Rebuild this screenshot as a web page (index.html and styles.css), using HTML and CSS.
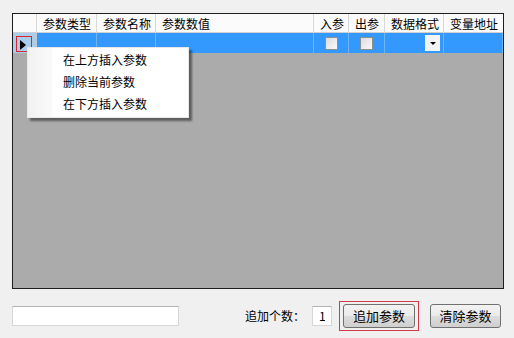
FILE: index.html
```html
<!DOCTYPE html>
<html lang="zh-CN">
<head>
    <meta charset="UTF-8">
    <title>参数设置</title>
    <link rel="stylesheet" href="styles.css">
</head>
<body>
    <div class="panel">
        <div class="grid">
            <div class="row head">
                <div class="cell rh"></div>
                <div class="cell">参数类型</div>
                <div class="cell">参数名称</div>
                <div class="cell">参数数值</div>
                <div class="cell">入参</div>
                <div class="cell">出参</div>
                <div class="cell">数据格式</div>
                <div class="cell">变量地址</div>
            </div>
            <div class="row sel">
                <div class="cell rh"><span class="mark"><span class="arrow"></span></span></div>
                <div class="cell"></div>
                <div class="cell"></div>
                <div class="cell"></div>
                <div class="cell mid"><span class="chk"></span></div>
                <div class="cell mid"><span class="chk"></span></div>
                <div class="cell drop"><span class="ddbtn"><span class="tri"></span></span></div>
                <div class="cell"></div>
            </div>

            <!-- 右键菜单 -->
            <div class="menu">
                <div class="item">在上方插入参数</div>
                <div class="item">删除当前参数</div>
                <div class="item">在下方插入参数</div>
            </div>
        </div>

        <div class="bottom">
            <input type="text" class="name-box">
            <span class="label">追加个数：</span>
            <input type="text" class="count-box" value="1">
            <span class="hl"><button>追加参数</button></span>
            <button class="clear">清除参数</button>
        </div>
    </div>
</body>
</html>
```

FILE: styles.css
```css
body {
    margin: 0;
    background: #f0f0f0;
    font-family: "Noto Sans CJK SC", "DejaVu Sans", sans-serif;
    font-size: 12px;
    color: #000;
}

.panel {
    padding: 13px 0 0 12px;
}

/* 表格 */
.grid {
    position: relative;
    width: 490px;
    height: 274px;
    border: 1px solid #1e1e1e;
    background: #ababab;
}

.row {
    display: grid;
    grid-template-columns: 24px 60px 59px 158px 35px 36px 59px 59px;
}

.head {
    height: 19px;
    background: #fbfbfb;
}

.head .cell {
    border-right: 1px solid #d8d8d8;
    border-bottom: 1px solid #d0d0d0;
    padding-left: 6px;
    line-height: 19px;
    white-space: nowrap;
}

.head .cell:last-child {
    border-right: none;
}

.sel {
    height: 20px;
    background: #3399ff;
}

.sel .cell {
    border-right: 1px solid #6fb5fa;
}

.sel .cell.rh {
    background: #a9cdea;
    border-right: 1px solid #c8c8c8;
}

.cell {
    box-sizing: border-box;
    overflow: hidden;
}

.mark {
    display: block;
    margin: 3px 0 0 3px;
    width: 16px;
    height: 16px;
    box-sizing: border-box;
    border: 1px solid #d7262e;
    position: relative;
}

.arrow {
    position: absolute;
    left: 3px;
    top: 3px;
    border-left: 6px solid #000;
    border-top: 5px solid transparent;
    border-bottom: 5px solid transparent;
}

.mid {
    display: flex;
    align-items: center;
    justify-content: center;
}

.chk {
    width: 11px;
    height: 11px;
    border: 1px solid #8e8f8f;
    background: linear-gradient(135deg, #dcdcdc, #fafafa);
}

.drop {
    display: flex;
    justify-content: flex-end;
    align-items: center;
    padding-right: 3px;
}

.ddbtn {
    width: 15px;
    height: 16px;
    background: #f4f4f4;
    display: flex;
    align-items: center;
    justify-content: center;
}

.tri {
    border-top: 3px solid #000;
    border-left: 3px solid transparent;
    border-right: 3px solid transparent;
}

/* 右键菜单 */
.menu {
    position: absolute;
    left: 14px;
    top: 33px;
    width: 160px;
    padding: 1px 0 2px;
    background: linear-gradient(to right, #f1f1f1 0, #fafafa 24px, #fff 25px);
    border: 1px solid #e8e8e8;
    box-shadow: 3px 3px 2px rgba(0, 0, 0, 0.45);
}

.item {
    height: 22px;
    line-height: 22px;
    padding-left: 35px;
}

/* 下部 */
.bottom {
    display: flex;
    align-items: center;
    height: 31px;
    margin-top: 11px;
}

input {
    box-sizing: border-box;
    height: 20px;
    border: 1px solid #d6d6d6;
    border-top-color: #b5b5b5;
    background: #fff;
    font: inherit;
    padding: 0 5px;
}

.name-box {
    width: 167px;
}

.label {
    margin-left: 66px;
}

.count-box {
    width: 20px;
    margin-left: 7px;
    padding: 0 6px;
}

.hl {
    display: block;
    margin-left: 7px;
    padding: 2px 3px;
    border: 1px solid #d23a48;
}

button {
    box-sizing: border-box;
    width: 72px;
    height: 24px;
    font: inherit;
    font-size: 13px;
    border: 1px solid #707070;
    border-radius: 3px;
    background: linear-gradient(#f2f2f2 0, #ebebeb 50%, #dddddd 51%, #cfcfcf 100%);
    padding: 0;
}

.clear {
    margin-left: 11px;
    width: 71px;
}
```
